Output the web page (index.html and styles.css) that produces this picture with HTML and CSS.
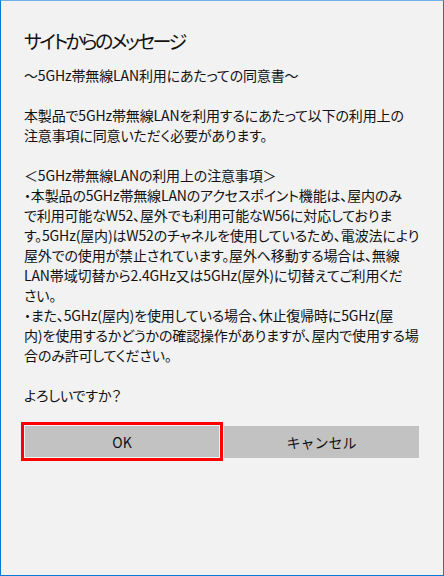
FILE: index.html
```html
<!DOCTYPE html>
<html lang="ja">
<head>
<meta charset="utf-8">
<title>サイトからのメッセージ</title>
<link rel="stylesheet" href="styles.css">
</head>
<body>
<div class="dialog">
  <h1 class="title">サイトからのメッセージ</h1>
  <div class="message">
    <p class="line">～5GHz帯無線LAN利用にあたっての同意書～</p>
    <p class="line blank"></p>
    <p class="line">本製品で5GHz帯無線LANを利用するにあたって以下の利用上の</p>
    <p class="line">注意事項に同意いただく必要があります。</p>
    <p class="line blank"></p>
    <p class="line">＜5GHz帯無線LANの利用上の注意事項＞</p>
    <p class="line">・本製品の5GHz帯無線LANのアクセスポイント機能は、屋内のみ</p>
    <p class="line">で利用可能なW52、屋外でも利用可能なW56に対応しておりま</p>
    <p class="line">す。5GHz(屋内)はW52のチャネルを使用しているため、電波法により</p>
    <p class="line">屋外での使用が禁止されています。屋外へ移動する場合は、無線</p>
    <p class="line">LAN帯域切替から2.4GHz又は5GHz(屋外)に切替えてご利用くだ</p>
    <p class="line">さい。</p>
    <p class="line">・また、5GHz(屋内)を使用している場合、休止復帰時に5GHz(屋</p>
    <p class="line">内)を使用するかどうかの確認操作がありますが、屋内で使用する場</p>
    <p class="line">合のみ許可してください。</p>
    <p class="line blank"></p>
    <p class="line">よろしいですか？</p>
  </div>
  <div class="buttons">
    <button class="btn btn-ok" type="button">OK</button>
    <button class="btn btn-cancel" type="button">キャンセル</button>
  </div>
</div>
</body>
</html>
```

FILE: styles.css
```css
* { box-sizing: border-box; }
html, body {
  margin: 0;
  padding: 0;
  background: #f2f2f2;
}
body {
  font-family: "Noto Sans CJK JP", "Noto Sans", sans-serif;
  color: #000;
}
.dialog {
  width: 444px;
  height: 576px;
  background: #f2f2f2;
  border: 1px solid #0a78d7;
  border-top-color: #6db0ec;
  padding: 26px 24px 0 23px;
  display: flex;
  flex-direction: column;
}
.title {
  margin: 0;
  font-size: 19px;
  line-height: 28px;
  font-weight: 400;
  font-feature-settings: "palt";
  letter-spacing: -2.6px;
  color: #111;
}
.message {
  margin-top: 10px;
  font-size: 14px;
  line-height: 20px;
  color: #111;
  font-feature-settings: "palt";
}
.line {
  margin: 0;
  height: 20px;
  white-space: nowrap;
  letter-spacing: -0.15px;
}
.buttons {
  margin-top: 20px;
  display: flex;
  align-items: flex-end;
  gap: 4px;
}
.btn {
  font-family: inherit;
  font-size: 14px;
  font-weight: 400;
  color: #111;
  background: #c2c2c2;
  border: 0;
  padding: 0;
  margin: 0;
}
.btn-ok {
  width: 196px;
  height: 33px;
  border: 1px solid #f4f4f4;
  outline: 3px solid #ff0000;
}
.btn-cancel {
  width: 195px;
  height: 32px;
}
```
